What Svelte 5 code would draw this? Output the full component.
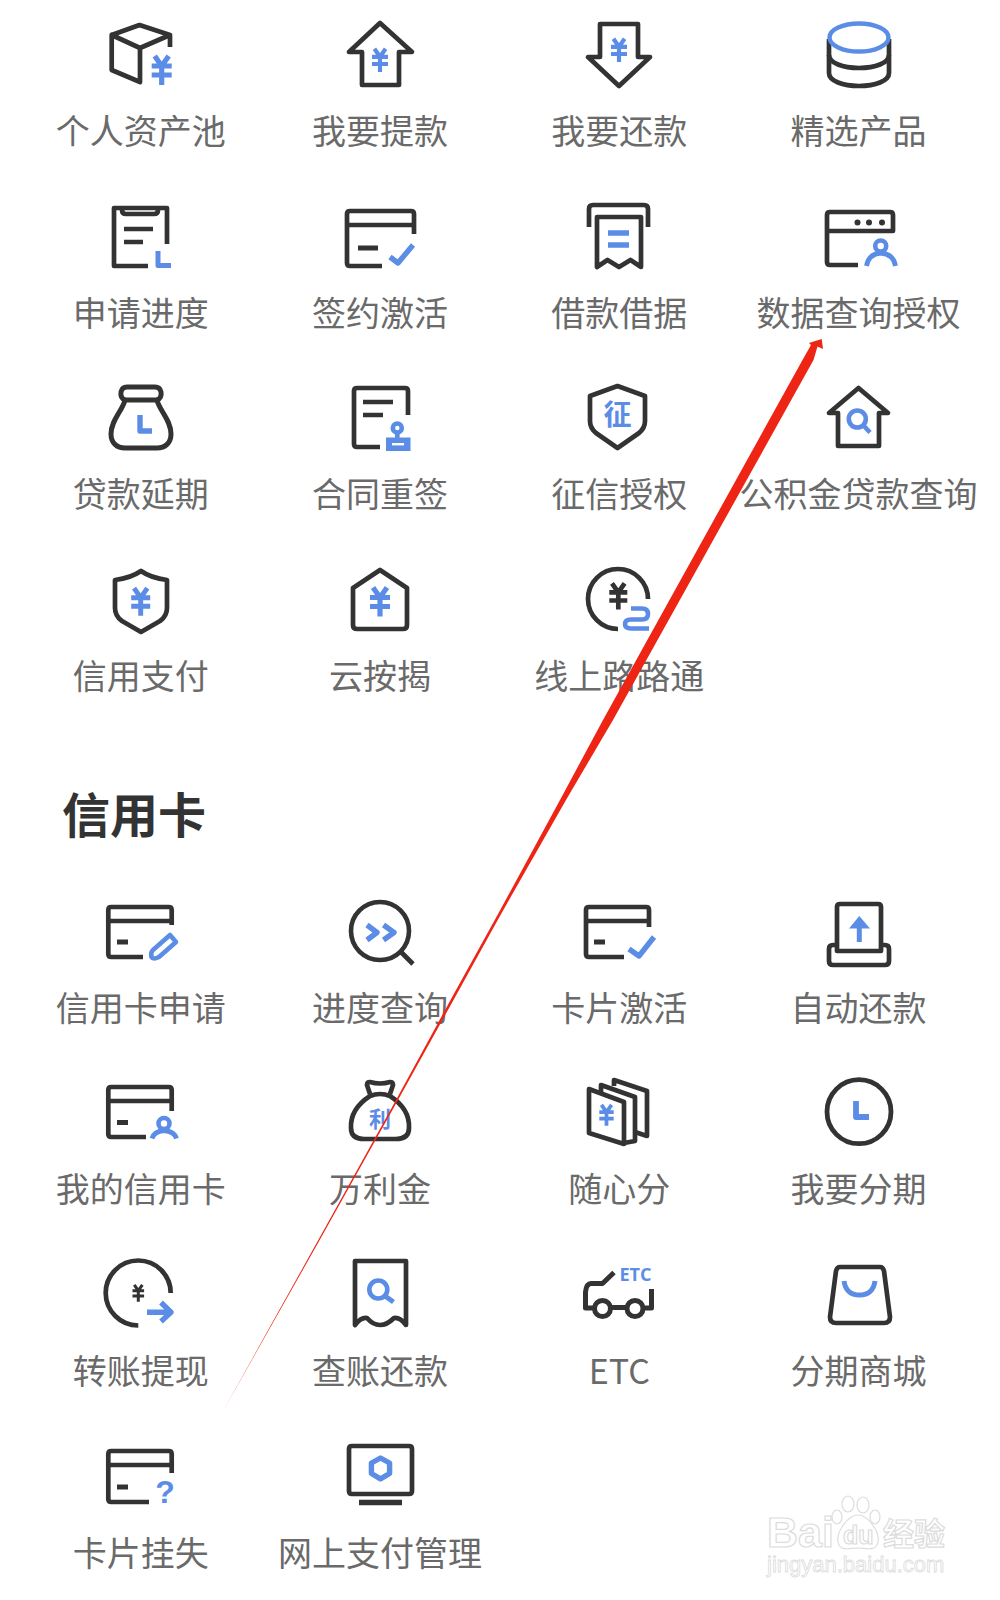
<script>
	const D = '#333';
	const B = '#5b8de6';

	const dark = (d, w = 4.7) => `<path d="${d}" fill="none" stroke="${D}" stroke-width="${w}" stroke-linejoin="round"/>`;
	const blue = (d, w = 4.6) => `<path d="${d}" fill="none" stroke="${B}" stroke-width="${w}" stroke-linejoin="round"/>`;
	const ring = (x, y, r, c = B, w = 4.6) => `<circle cx="${x}" cy="${y}" r="${r}" fill="none" stroke="${c}" stroke-width="${w}"/>`;
	const word = (t, x, y, size, family = "'Noto Sans CJK SC'") =>
		`<text x="${x}" y="${y}" font-size="${size}" font-weight="700" font-family="${family}, sans-serif" fill="${B}" text-anchor="middle">${t}</text>`;

	function yuan(x, y, s, c = B) {
		return `<g transform="translate(${x} ${y}) scale(${s})"><path d="M-7 -14L0 -4L7 -14M-10 -4H10M-10 5H10M0 -4V15" fill="none" stroke="${c}" stroke-width="5.2"/></g>`;
	}

	// card outline: open on the right side and the bottom right corner
	function card(l, r, t, b, band, rightTo, bottomTo, dashL, dashR, dashY) {
		return (
			dark(`M${bottomTo} ${b}H${l + 3}Q${l} ${b} ${l} ${b - 3}V${t + 3}Q${l} ${t} ${l + 3} ${t}H${r - 3}Q${r} ${t} ${r} ${t + 3}V${rightTo}`) +
			dark(`M${l} ${band}H${r}`) +
			dark(`M${dashL} ${dashY}H${dashR}`, 5)
		);
	}

	const person = (x, y, l, r, b) =>
		ring(x, y, 5.5) + blue(`M${l} ${b}Q${l + 2} ${y + 8} ${x} ${y + 7}Q${r - 2} ${y + 8} ${r} ${b}`, 4.8);

	const icons = {
		pool:
			dark('M10.7 20L38.5 10L69 20L39 33L10.7 20V55L39 67V33M69 20V32') + yuan(60.7, 55, 1),
		withdraw: dark('M40 8L72 37H59V70H22V37H9Z') + yuan(40, 45, 0.8),
		repay: dark('M21 9H59V42H71L40 71L9 42H21Z') + yuan(40, 35, 0.8),
		products:
			dark('M10 24V58C10 66 24 71 40 71S70 66 70 58V24') +
			dark('M10 40C10 48 24 53 40 53S70 48 70 40') +
			`<ellipse cx="40" cy="22.5" rx="29.5" ry="14" fill="#fff" stroke="${B}" stroke-width="4.4"/>`,
		progress:
			dark('M47 69H13V11H66V47') +
			dark('M21 11V13Q21 17 25 17H53Q57 17 57 13V11') +
			dark('M23 32H52M23 45H42') +
			blue('M57 54V68.5H70', 5),
		sign:
			card(7, 74, 14, 69, 28, 37, 42, 18, 38, 51) + blue('M50 60L58 66L73 48', 5.4),
		receipt:
			dark('M10 30V12Q10 8 14 8H65Q69 8 69 12V30') +
			dark('M18 20H62V70L51.5 63L40 70L28.5 63L18 70Z') +
			blue('M29 36H50M29 48H50', 5.4),
		window:
			dark('M39 68H11Q8 68 8 65V18Q8 15 11 15H71Q74 15 74 18V34H8') +
			`<circle cx="38.5" cy="25.5" r="3" fill="${D}"/><circle cx="50" cy="25.5" r="3" fill="${D}"/><circle cx="63" cy="25.5" r="3" fill="${D}"/>` +
			person(61.7, 49, 47.5, 76.5, 69),
		delay:
			dark('M24 22H56C58 32 70 42 70 56C70 65 64 70 56 70H24C16 70 10 65 10 56C10 42 22 32 24 22Z', 5) +
			dark('M24 22Q19 20 20 14Q21 9 26 9H54Q59 9 60 14Q61 20 56 22', 5) +
			blue('M39 37V53H51', 5.4),
		contract:
			dark('M40 69H17Q14 69 14 66V13Q14 10 17 10H65Q68 10 68 13V37') +
			dark('M23 24H53M23 37H43') +
			ring(57.3, 50, 4.5) +
			blue('M57.3 54V60') +
			`<rect x="46" y="59.5" width="24.5" height="13.5" fill="${B}"/><rect x="52" y="65" width="12" height="2.4" fill="#fff"/>`,
		credit:
			dark('M38.5 8L66 18V43Q66 50 60 55L38.5 70L17 55Q11 50 11 43V18Z') +
			word('征', 38.5, 47, 28),
		fundSearch:
			dark('M39.5 10L69 35H60V68H19V35H10Z') + ring(38.3, 41, 8.5) + blue('M44.5 47.5L51 54.5'),
		creditPay:
			dark('M40 11Q50 18 66 20V48Q66 56 59 61L40 72L21 61Q14 56 14 48V20Q30 18 40 11Z') +
			yuan(39.7, 41.5, 0.95),
		mortgage:
			dark('M40 10L67 28V65Q67 69 63 69H17Q13 69 13 65V28Z') + yuan(40, 41.5, 1),
		road:
			dark('M69 39A30 30 0 1 0 39 69') +
			yuan(39.3, 36, 0.9, D) +
			blue('M52 48.5H63Q69 48.5 69 54Q69 59.5 63 59.5H52Q46 59.5 46 64Q46 68.5 52 68.5H70'),
		apply:
			card(7.3, 70.7, 15, 65, 29, 33, 42, 16, 27, 50) +
			blue('M69 43L75 50L58 65Q52 68 50.5 65Q49.5 60 52 58Z'),
		query:
			ring(40, 39, 29, D) +
			dark('M61 60L73 72') +
			blue('M27 33L37 40.5L27 48M43.5 33L54 40.5L43.5 48', 5.4),
		activate:
			card(7, 70, 15, 65, 29, 35, 45, 15, 26, 50) + blue('M50 57L60 64L75 45', 5.4),
		auto:
			dark('M18 59V15Q18 12 21 12H59Q62 12 62 15V59Z') +
			dark('M18 53H14Q10 53 10 57V69Q10 73 14 73H66Q70 73 70 69V57Q70 53 66 53H62') +
			blue('M40.3 30V50', 5) +
			`<path d="M30 36.5L40.3 24L51 36.5Z" fill="${B}"/>`,
		mine:
			card(7.3, 70.7, 14, 64, 28, 38, 45, 16, 27, 49.5) + person(63, 50.5, 51, 75.5, 65.5),
		wanli:
			dark('M30 23Q10 36 11 55Q11 66 24 66H56Q69 66 69 55Q70 36 50 23Q40 19 30 23Z') +
			dark('M30 21L27 12Q27 9 30 9Q40 12 50 9Q53 9 53 12L50 21') +
			word('利', 40, 54, 22),
		split:
			dark('M10 16L45 29V71L10 60Z') +
			dark('M22 20V12L56 24V68L45 70') +
			dark('M35 13V7L68 18V63L56 59') +
			yuan(27.5, 42, 0.72),
		installment: ring(40, 38.7, 32, D, 4.8) + blue('M37 28V44H50', 5.8),
		transfer:
			dark('M69.7 38A32.5 32.5 0 1 0 37.3 70.5') +
			yuan(37.3, 38, 0.58, D) +
			blue('M46 57.3H69M60 47.5L70 57.3L60 66.5', 5.4),
		bill:
			dark('M15 6H66V70Q60 62 54 63Q47 70 40 70Q33 70 27 63Q21 62 15 70Z') +
			ring(38.3, 34.5, 9) +
			blue('M45 41L53.5 47', 5),
		etc:
			dark('M35 17.5L23.5 28.5H12Q7.5 28.5 6.5 37V53H14M33 52.5H47M65 53H72.5V34', 5) +
			ring(23.5, 53.5, 8, D, 5) +
			ring(56, 53.5, 8, D, 5) +
			word('ETC', 56.5, 26, 18, "'Open Sans'"),
		mall:
			dark('M21 12H61Q64 12 65 16L71 62Q71 68 65 68H17Q11 68 11 62L17 16Q18 12 21 12Z') +
			blue('M25 26Q27 40 40.5 40Q54 40 56 26', 5),
		lost:
			card(7.3, 70.7, 14, 65, 28, 36, 48, 16, 27, 50) +
			word('?', 64, 66, 32, "'Liberation Sans'"),
		online:
			dark('M12 9H69Q72 9 72 12V54Q72 57 69 57H12Q9 57 9 54V12Q9 9 12 9Z') +
			dark('M19 65.5H62', 5.4) +
			blue('M40.5 21L49.6 26V36.5L40.5 41.8L31.4 36.5V26Z', 5.4)
	};

	const loans = [
		['个人资产池', 'pool'],
		['我要提款', 'withdraw'],
		['我要还款', 'repay'],
		['精选产品', 'products'],
		['申请进度', 'progress'],
		['签约激活', 'sign'],
		['借款借据', 'receipt'],
		['数据查询授权', 'window'],
		['贷款延期', 'delay'],
		['合同重签', 'contract'],
		['征信授权', 'credit'],
		['公积金贷款查询', 'fundSearch'],
		['信用支付', 'creditPay'],
		['云按揭', 'mortgage'],
		['线上路路通', 'road']
	];

	const cards = [
		['信用卡申请', 'apply'],
		['进度查询', 'query'],
		['卡片激活', 'activate'],
		['自动还款', 'auto'],
		['我的信用卡', 'mine'],
		['万利金', 'wanli'],
		['随心分', 'split'],
		['我要分期', 'installment'],
		['转账提现', 'transfer'],
		['查账还款', 'bill'],
		['ETC', 'etc'],
		['分期商城', 'mall'],
		['卡片挂失', 'lost'],
		['网上支付管理', 'online']
	];
</script>

{#snippet tile(label, icon)}
	<li class="tile">
		<svg class="icon" viewBox="0 0 80 80" width="80" height="80" aria-hidden="true">{@html icons[icon]}</svg>
		<span class="label">{label}</span>
	</li>
{/snippet}

<main class="page">
	<ul class="grid first">
		{#each loans as [label, icon]}
			{@render tile(label, icon)}
		{/each}
	</ul>

	<h2>信用卡</h2>

	<ul class="grid">
		{#each cards as [label, icon]}
			{@render tile(label, icon)}
		{/each}
	</ul>

	<!-- annotation arrow and watermark sit on top of the screenshot -->
	<svg class="overlay" viewBox="0 0 1000 1600" width="1000" height="1600" aria-hidden="true">
		<polygon
			class="arrow"
			points="821.7,339 823,349 817.5,346.5 813.5,360 613,720 566,800 500.5,915 453.5,1000 398,1100 319.7,1240 222,1413 318.3,1240 396,1100 450.5,1000 497.5,915 560,800 603,720 802.5,360 811,345 809,343"
		/>
		<g class="mark">
			<ellipse cx="848" cy="1504" rx="6" ry="8" />
			<ellipse cx="863" cy="1505" rx="6" ry="8" />
			<ellipse cx="837" cy="1517" rx="5" ry="7" />
			<ellipse cx="875" cy="1517" rx="5" ry="7" />
			<path d="M858 1515C868 1515 880 1532 878 1542C876 1552 866 1548 858 1548C850 1548 840 1552 838 1542C836 1532 848 1515 858 1515Z" />
			<text class="mark-latin" x="767" y="1547" font-size="43">Bai</text>
			<text class="mark-latin" x="843" y="1544" font-size="25">du</text>
			<text class="mark-cjk" x="883" y="1545" font-size="31">经验</text>
			<text class="mark-url" x="767" y="1572" font-size="22">jingyan.baidu.com</text>
		</g>
	</svg>
</main>

<style>
	:global(body) {
		background: #fff;
	}

	.page {
		position: relative;
		width: 1000px;
		height: 1600px;
		overflow: hidden;
		background: #fff;
		font-family: 'Noto Sans CJK SC', 'Noto Sans', sans-serif;
	}

	.grid {
		list-style: none;
		margin: 0;
		padding: 0 0 0 21px;
		display: grid;
		grid-template-columns: repeat(4, 239.3px);
		grid-auto-rows: 136px;
		row-gap: 45.6px;
	}

	.first {
		padding-top: 15px;
	}

	.tile {
		display: flex;
		flex-direction: column;
		align-items: center;
		gap: 15px;
	}

	.icon {
		display: block;
		flex: none;
	}

	.label {
		font-size: 34px;
		line-height: 40px;
		color: #6a6a6a;
		white-space: nowrap;
	}

	h2 {
		margin: 86px 0 50px 62px;
		font-size: 48px;
		line-height: 60px;
		font-weight: 700;
		color: #333;
	}

	.overlay {
		position: absolute;
		left: 0;
		top: 0;
		pointer-events: none;
	}

	.arrow {
		fill: #ee2415;
	}

	.mark {
		fill: #fff;
		stroke: #dcdcdc;
		stroke-width: 1.2;
	}

	.mark-latin {
		font-family: 'Liberation Sans', sans-serif;
		font-weight: 700;
	}

	.mark-cjk {
		font-family: 'Noto Sans CJK SC', sans-serif;
		font-weight: 700;
	}

	.mark-url {
		font-family: 'Liberation Sans', sans-serif;
		stroke-width: 0.8;
	}
</style>
